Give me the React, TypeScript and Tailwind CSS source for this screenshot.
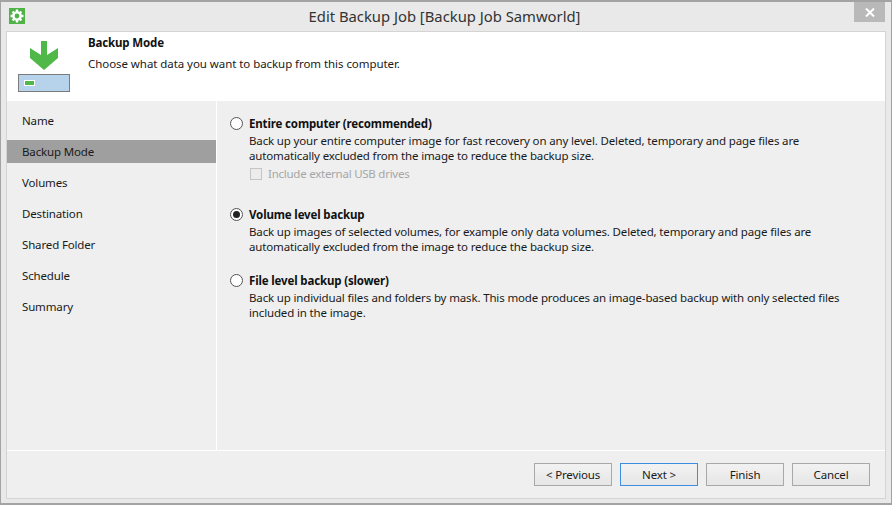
const steps = ["Name", "Backup Mode", "Volumes", "Destination", "Shared Folder", "Schedule", "Summary"];

const options = [
  {
    title: "Entire computer (recommended)",
    lines: [
      "Back up your entire computer image for fast recovery on any level. Deleted, temporary and page files are",
      "automatically excluded from the image to reduce the backup size.",
    ],
    checked: false,
    usb: true,
  },
  {
    title: "Volume level backup",
    lines: [
      "Back up images of selected volumes, for example only data volumes. Deleted, temporary and page files are",
      "automatically excluded from the image to reduce the backup size.",
    ],
    checked: true,
    usb: false,
  },
  {
    title: "File level backup (slower)",
    lines: [
      "Back up individual files and folders by mask. This mode produces an image-based backup with only selected files",
      "included in the image.",
    ],
    checked: false,
    usb: false,
  },
];

function GearIcon() {
  return (
    <svg width="16" height="16" viewBox="0 0 16 16" className="block">
      <rect width="16" height="16" fill="#4fb348" />
      <circle cx="8" cy="8" r="3.600" fill="none" stroke="#fff" strokeWidth="2.400" />
      <path d="M6.800 1.500h2.400v3H6.800zM6.800 11.500h2.400v3H6.800zM1.500 6.800h3v2.400h-3zM11.500 6.800h3v2.400h-3zM2.800 4.400 4.400 2.800l2 2L4.800 6.400zM9.600 11.200l1.600-1.600 2 2-1.600 1.600zM11.600 2.800l1.600 1.600-2 2L9.600 4.800zM4.800 9.600l1.600 1.600-2 2-1.600-1.600z" fill="#fff" />
    </svg>
  );
}

function BackupIcon() {
  return (
    <svg width="52" height="51" viewBox="0 0 52 51" className="block">
      <path d="M23 0h6v14l11-7v10L26 29 12 17V7l11 7z" fill="#50b848" />
      <rect x="0.500" y="33.500" width="51" height="17" fill="#b7d2eb" stroke="#7b7b7b" />
      <rect x="6" y="39" width="11" height="6" fill="#fff" />
      <rect x="7" y="40" width="9" height="4" fill="#50b848" />
    </svg>
  );
}

function Radio({ checked }: { checked: boolean }) {
  return (
    <span className="flex h-[13px] w-[13px] shrink-0 items-center justify-center rounded-full border border-[#555] bg-white">
      {checked && <span className="h-[7px] w-[7px] rounded-full bg-[#222]" />}
    </span>
  );
}

function Btn({ label, active }: { label: string; active?: boolean }) {
  return (
    <button
      className={`h-[23px] w-[78px] border bg-gradient-to-b from-[#f2f2f2] to-[#e6e6e6] leading-[21px] text-[#1a1a1a] ${
        active ? "border-[#3c8fe0]" : "border-[#a8a8a8]"
      }`}
    >
      {label}
    </button>
  );
}

export default function App() {
  return (
    <div className="flex h-[505px] w-[892px] flex-col overflow-hidden border-x border-t-2 border-b-2 border-[#a3a3a3] bg-[#e9e9e9] font-['Noto_Sans','Open_Sans',sans-serif] text-[11.500px] tracking-[-0.150px] text-[#1a1a1a]">
      <div className="flex h-[29px] shrink-0 items-start">
        <div className="ml-[8px] mt-[6px]">
          <GearIcon />
        </div>
        <div className="flex-1 pl-[10px] pt-[4px] text-center text-[14.800px] leading-[20px] tracking-normal text-[#333]">
          Edit Backup Job [Backup Job Samworld]
        </div>
        <div className="mr-[6px] flex h-[20px] w-[31px] items-center justify-center bg-[#b9b9b9]">
          <svg width="10" height="9" viewBox="0 0 10 9">
            <path d="M1 .5 9 8.500M9 .5 1 8.500" stroke="#fff" strokeWidth="2" />
          </svg>
        </div>
      </div>

      <div className="mx-[5px] flex h-[468px] flex-col border border-[#d4d4d4] bg-[#efefef]">
        <div className="flex h-[69px] shrink-0 bg-white">
          <div className="ml-[11px] mt-[9px]">
            <BackupIcon />
          </div>
          <div className="ml-[18px] pt-[1px]">
            <div className="font-bold leading-[20px] text-[#111]">Backup Mode</div>
            <div className="mt-[1px] leading-[20px] tracking-[-0.060px]">
              Choose what data you want to backup from this computer.
            </div>
          </div>
        </div>

        <div className="flex h-[350px] shrink-0 border-b border-white">
          <div className="flex w-[210px] shrink-0 flex-col gap-[8px] border-r border-white pt-[8px]">
            {steps.map((s) => (
              <div
                key={s}
                className={`h-[23px] w-[209px] pl-[15px] leading-[23px] ${s === "Backup Mode" ? "bg-[#9f9f9f]" : ""}`}
              >
                {s}
              </div>
            ))}
          </div>

          <div className="flex flex-1 flex-col pl-[13px] pt-[13px]">
            {options.map((o) => (
              <div key={o.title} className="mb-[17px]">
                <div className="flex h-[19px] items-center gap-[6px]">
                  <Radio checked={o.checked} />
                  <span className="font-bold leading-[19px] text-[#111]">{o.title}</span>
                </div>
                <div className="pl-[19px]">
                  {o.lines.map((l) => (
                    <div key={l} className="whitespace-nowrap leading-[15px]">
                      {l}
                    </div>
                  ))}
                </div>
                {o.usb && (
                  <div className="mb-[7px] mt-[3px] flex h-[15px] items-center gap-[6px] pl-[20px] tracking-[-0.250px] text-[#a6a6a6]">
                    <span className="h-[12px] w-[12px] border border-[#c4c4c4] bg-[#ececec]" />
                    <span>Include external USB drives</span>
                  </div>
                )}
              </div>
            ))}
          </div>
        </div>

        <div className="flex flex-1 items-start justify-end gap-[8px] pr-[15px] pt-[12px]">
          <Btn label="< Previous" />
          <Btn label="Next >" active />
          <Btn label="Finish" />
          <Btn label="Cancel" />
        </div>
      </div>
    </div>
  );
}
